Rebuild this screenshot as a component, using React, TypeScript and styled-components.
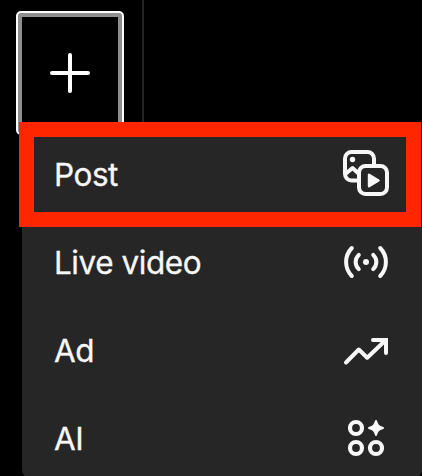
import React from "react";
import styled, { createGlobalStyle } from "styled-components";

const GlobalStyle = createGlobalStyle`
  body { margin: 0; background: #000; overflow: hidden; }
  * { box-sizing: border-box; }
`;

const Page = styled.div`
  position: relative;
  width: 422px;
  height: 476px;
  overflow: hidden;
  background: #000;
  font-family: Inter, "Liberation Sans", sans-serif;
`;

const Sidebar = styled.aside`
  width: 144px;
  height: 476px;
  padding: 11px 0 0 16px;
  border-right: 2px solid #242424;
`;

const CreateButton = styled.button`
  display: flex;
  width: 108px;
  height: 124px;
  padding: 0;
  border: 2px solid #fff;
  border-radius: 5px;
  background: #8e8e8e;
`;

const ButtonFace = styled.span`
  display: flex;
  flex: 1;
  align-self: stretch;
  justify-content: center;
  padding-top: 36px;
  margin: 4px 4px 0;
  background: #000;
`;

const Menu = styled.ul`
  position: absolute;
  top: 122px;
  left: 22px;
  width: 400px;
  height: 356px;
  margin: 0;
  padding: 8px 32px 0;
  list-style: none;
  border-radius: 0 0 8px 8px;
  background: #262626;
`;

const MenuItem = styled.li`
  display: flex;
  align-items: center;
  justify-content: space-between;
  height: 88px;
  color: #f7f7f7;
`;

const Label = styled.span`
  padding-top: 2px;
  font-size: 31.5px;
  line-height: 40px;
  font-weight: 400;
  letter-spacing: -0.45px;
  -webkit-text-stroke: 0.3px currentColor;
`;

const Icon = styled.svg`
  display: block;
  flex: none;
  width: 48px;
  height: 48px;
  fill: none;
  stroke: currentColor;
  stroke-linecap: round;
  stroke-linejoin: round;
`;

const Highlight = styled.div`
  position: absolute;
  top: 122px;
  left: 19px;
  width: 402px;
  height: 105px;
  border: 15px solid #ff2600;
`;

const PostIcon = () => (
  <Icon viewBox="0 0 48 48" strokeWidth="4">
    <rect x="3" y="2" width="29" height="28.5" rx="6.5" />
    <circle cx="10.5" cy="9.5" r="2.7" fill="currentColor" stroke="none" />
    <path d="M4 23.5 10.5 18l6 5.5" />
    <rect x="17" y="16" width="28" height="28" rx="6.5" fill="#262626" />
    <path d="M27 24.8v11.4l9.5-5.7z" fill="currentColor" strokeWidth="2.4" />
  </Icon>
);

const LiveIcon = () => (
  <Icon viewBox="0 0 48 48" strokeWidth="4">
    <circle cx="24" cy="24" r="3" fill="currentColor" stroke="none" />
    <path d="M16.8 16.8c-4.2 4.2-4.2 10.2 0 14.4M31.2 16.8c4.2 4.2 4.2 10.2 0 14.4" />
    <path d="M9.8 10c-7.6 7.8-7.6 20.2 0 28M38.2 10c7.6 7.8 7.6 20.2 0 28" />
  </Icon>
);

const TrendIcon = () => (
  <Icon viewBox="0 0 48 48" strokeWidth="4">
    <path d="m4 36.5 12.8-13 8.4 8.2L43 14.8" />
    <path d="M31 14h13v13" strokeLinejoin="miter" />
  </Icon>
);

const AiIcon = () => (
  <Icon viewBox="0 0 48 48" strokeWidth="4.2">
    <circle cx="14" cy="14" r="6" />
    <circle cx="14" cy="34" r="6" />
    <circle cx="34" cy="34" r="6" />
    <path
      d="M34 7c1.5 4.6 2.4 5.5 7 7-4.6 1.5-5.5 2.4-7 7-1.5-4.6-2.4-5.5-7-7 4.6-1.5 5.5-2.4 7-7z"
      fill="currentColor"
      strokeWidth="2"
    />
  </Icon>
);

const PlusIcon = () => (
  <svg width="40" height="40" viewBox="0 0 40 40" fill="none" stroke="#fff" strokeWidth="4" strokeLinecap="round">
    <path d="M20 2v36M2 20h36" />
  </svg>
);

const items = [
  { label: "Post", icon: <PostIcon /> },
  { label: "Live video", icon: <LiveIcon /> },
  { label: "Ad", icon: <TrendIcon /> },
  { label: "AI", icon: <AiIcon /> },
];

export default function App() {
  return (
    <Page>
      <GlobalStyle />
      <Sidebar>
        <CreateButton aria-label="Create">
          <ButtonFace>
            <PlusIcon />
          </ButtonFace>
        </CreateButton>
      </Sidebar>
      <Menu>
        {items.map(({ label, icon }) => (
          <MenuItem key={label}>
            <Label>{label}</Label>
            {icon}
          </MenuItem>
        ))}
      </Menu>
      <Highlight />
    </Page>
  );
}
